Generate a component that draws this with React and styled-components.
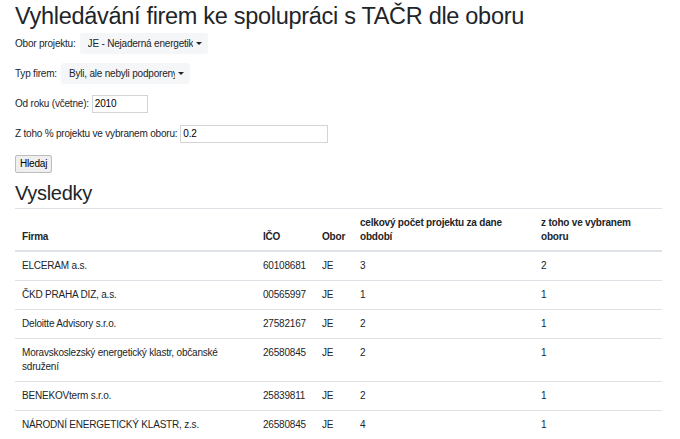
import React from "react";
import styled, { createGlobalStyle } from "styled-components";

const Global = createGlobalStyle`
  html, body { margin: 0; padding: 0; background: #fff; }
  body {
    font-family: "Liberation Sans", Arial, Helvetica, sans-serif;
    color: #212529;
    font-size: 10px;
    letter-spacing: -0.2px;
  }
`;

const Page = styled.main`
  padding: 0 18px 0 15px;
`;

const Title = styled.h1`
  margin: 0;
  padding-top: 1px;
  font-size: 23.5px;
  font-weight: 400;
  line-height: 30px;
  letter-spacing: -0.3px;
`;

const Form = styled.form`
  display: flex;
  flex-direction: column;
  align-items: flex-start;
  gap: 9px;
  margin-top: 2px;
`;

const Row = styled.div`
  display: flex;
  align-items: center;
  height: 21px;
  gap: ${(p) => p.$gap || 3}px;
`;

const Label = styled.label`
  font-size: 10px;
  white-space: nowrap;
`;

const SelectBtn = styled.div`
  display: flex;
  align-items: center;
  width: ${(p) => p.$w}px;
  height: 21px;
  box-sizing: border-box;
  padding: 0 6px 0 8px;
  background: #f5f6f7;
  border-radius: 3px;
  font-size: 10px;
  color: #212529;
  gap: 3px;
`;

const SelectText = styled.span`
  flex: 1;
  overflow: hidden;
  white-space: nowrap;
`;

const Caret = styled.span`
  width: 0;
  height: 0;
  border-left: 3px solid transparent;
  border-right: 3px solid transparent;
  border-top: 3.5px solid #212529;
`;

const Input = styled.div`
  width: ${(p) => p.$w}px;
  height: 18px;
  box-sizing: border-box;
  border: 1px solid #d4d4d4;
  background: #fff;
  font-size: 10px;
  line-height: 16px;
  padding: 0 2px;
  color: #000;
`;

const Button = styled.div`
  height: 18px;
  box-sizing: border-box;
  padding: 0 4px;
  border: 1px solid #bdbdbd;
  border-radius: 2px;
  background: #efefef;
  font-size: 10px;
  line-height: 16px;
  color: #000;
`;

const SubTitle = styled.h2`
  margin: 7px 0 0;
  font-size: 20px;
  font-weight: 400;
  line-height: 24px;
  letter-spacing: -0.3px;
`;

const Table = styled.table`
  margin-top: 3px;
  width: 647px;
  border-collapse: collapse;
  table-layout: fixed;
  font-size: 10px;
`;

const Th = styled.th`
  text-align: left;
  vertical-align: bottom;
  font-weight: 700;
  padding: 7px 7px 6px;
  line-height: 14px;
  border-top: 1px solid #dee2e6;
  border-bottom: 2px solid #dee2e6;
`;

const Td = styled.td`
  vertical-align: top;
  padding: 7px 7px;
  line-height: 14px;
  border-top: 1px solid #dee2e6;
`;

const LastRow = styled.tr`
  & > td {
    border-bottom: 1px solid #dee2e6;
  }
`;

const rows = [
  ["ELCERAM a.s.", "60108681", "JE", "3", "2"],
  ["ČKD PRAHA DIZ, a.s.", "00565997", "JE", "1", "1"],
  ["Deloitte Advisory s.r.o.", "27582167", "JE", "2", "1"],
  ["Moravskoslezský energetický klastr, občanské sdružení", "26580845", "JE", "2", "1"],
  ["BENEKOVterm s.r.o.", "25839811", "JE", "2", "1"],
  ["NÁRODNÍ ENERGETICKÝ KLASTR, z.s.", "26580845", "JE", "4", "1"],
];

export default function App() {
  return (
    <Page>
      <Global />
      <Title>Vyhledávání firem ke spolupráci s TAČR dle oboru</Title>
      <Form>
        <Row $gap={4}>
          <Label>Obor projektu:</Label>
          <SelectBtn $w={128}>
            <SelectText>JE - Nejaderná energetika</SelectText>
            <Caret />
          </SelectBtn>
        </Row>
        <Row $gap={4}>
          <Label>Typ firem:</Label>
          <SelectBtn $w={129}>
            <SelectText>Byli, ale nebyli podporeny</SelectText>
            <Caret />
          </SelectBtn>
        </Row>
        <Row>
          <Label>Od roku (včetne):</Label>
          <Input $w={56}>2010</Input>
        </Row>
        <Row>
          <Label>Z toho % projektu ve vybranem oboru:</Label>
          <Input $w={148}>0.2</Input>
        </Row>
        <Row>
          <Button>Hledaj</Button>
        </Row>
      </Form>
      <SubTitle>Vysledky</SubTitle>
      <Table>
        <colgroup>
          <col style={{ width: 241 }} />
          <col style={{ width: 59 }} />
          <col style={{ width: 38 }} />
          <col style={{ width: 181 }} />
          <col style={{ width: 128 }} />
        </colgroup>
        <thead>
          <tr>
            <Th>Firma</Th>
            <Th>IČO</Th>
            <Th>Obor</Th>
            <Th>celkový počet projektu za dane období</Th>
            <Th>z toho ve vybranem oboru</Th>
          </tr>
        </thead>
        <tbody>
          {rows.map((r, i) => {
            const R = i === rows.length - 1 ? LastRow : "tr";
            return (
              <R key={i}>
                {r.map((c, j) => (
                  <Td key={j}>{c}</Td>
                ))}
              </R>
            );
          })}
        </tbody>
      </Table>
    </Page>
  );
}
